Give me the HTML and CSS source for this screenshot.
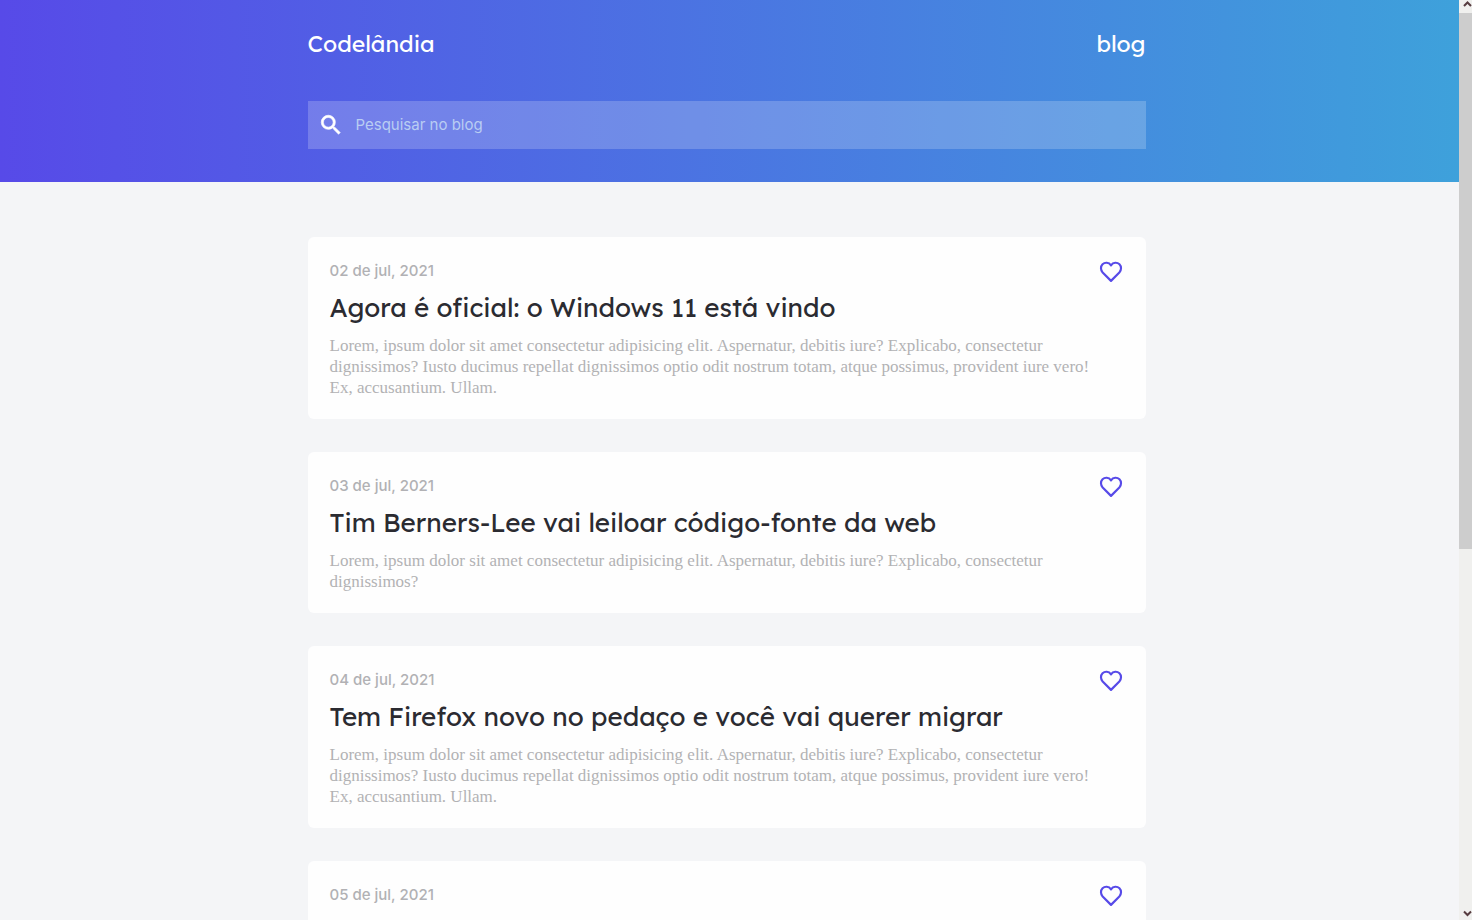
FILE: index.html
```html
<!DOCTYPE html>
<html lang="pt-BR">
<head>
<meta charset="utf-8">
<title>Codelândia</title>
<link rel="stylesheet" href="styles.css">
</head>
<body>
<svg class="sprite" aria-hidden="true">
  <symbol id="heart" viewBox="0 0 24 24"><path d="M12 20.200 4.300 12.400C2.300 10.200 2.200 6.800 4.200 4.800 6.300 2.900 9.900 2.900 12 5.800 14.100 2.900 17.700 2.900 19.800 4.800 21.800 6.800 21.700 10.200 19.700 12.400Z" fill="none" stroke="currentColor" stroke-width="2" stroke-linejoin="round"/></symbol>
</svg>
<div class="page">
  <header class="header">
    <div class="container">
      <div class="topbar">
        <a class="brand" href="#">Codelândia</a>
        <a class="brand" href="#">blog</a>
      </div>
      <form class="search">
        <svg class="search-icon" viewBox="0 0 24 24" aria-hidden="true"><path fill="currentColor" d="M15.500 14h-.79l-.28-.27A6.471 6.471 0 0 0 16 9.500 6.500 6.500 0 1 0 9.500 16c1.610 0 3.090-.59 4.230-1.570l.27.28v.79l5 4.990L20.490 19l-4.990-5zm-6 0C7.010 14 5 11.990 5 9.500S7.010 5 9.500 5 14 7.010 14 9.500 11.990 14 9.500 14z"/></svg>
        <input class="search-input" type="text" placeholder="Pesquisar no blog" aria-label="Pesquisar no blog">
      </form>
    </div>
  </header>
  <main class="content">
    <div class="container posts">
      <article class="card">
        <div class="card-top"><time class="date" datetime="2021-07-02">02 de jul, 2021</time><button class="like" type="button" aria-label="Curtir"><svg class="heart"><use href="#heart"/></svg></button></div>
        <h2 class="title">Agora é oficial: o Windows 11 está vindo</h2>
        <p class="text">Lorem, ipsum dolor sit amet consectetur adipisicing elit. Aspernatur, debitis iure? Explicabo, consectetur dignissimos? Iusto ducimus repellat dignissimos optio odit nostrum totam, atque possimus, provident iure vero! Ex, accusantium. Ullam.</p>
      </article>
      <article class="card">
        <div class="card-top"><time class="date" datetime="2021-07-03">03 de jul, 2021</time><button class="like" type="button" aria-label="Curtir"><svg class="heart"><use href="#heart"/></svg></button></div>
        <h2 class="title">Tim Berners-Lee vai leiloar código-fonte da web</h2>
        <p class="text">Lorem, ipsum dolor sit amet consectetur adipisicing elit. Aspernatur, debitis iure? Explicabo, consectetur dignissimos?</p>
      </article>
      <article class="card">
        <div class="card-top"><time class="date" datetime="2021-07-04">04 de jul, 2021</time><button class="like" type="button" aria-label="Curtir"><svg class="heart"><use href="#heart"/></svg></button></div>
        <h2 class="title">Tem Firefox novo no pedaço e você vai querer migrar</h2>
        <p class="text">Lorem, ipsum dolor sit amet consectetur adipisicing elit. Aspernatur, debitis iure? Explicabo, consectetur dignissimos? Iusto ducimus repellat dignissimos optio odit nostrum totam, atque possimus, provident iure vero! Ex, accusantium. Ullam.</p>
      </article>
      <article class="card">
        <div class="card-top"><time class="date" datetime="2021-07-05">05 de jul, 2021</time><button class="like" type="button" aria-label="Curtir"><svg class="heart"><use href="#heart"/></svg></button></div>
      </article>
    </div>
  </main>
</div>
<div class="scrollbar" aria-hidden="true">
  <svg class="arrow" viewBox="0 0 13 13"><path d="M5 6 8.500 2.500 12 6"/></svg>
  <div class="track"><div class="thumb"></div></div>
  <svg class="arrow" viewBox="0 0 13 13"><path d="M5 4.500 8.500 8 12 4.500"/></svg>
</div>
</body>
</html>
```
FILE: styles.css
```css
* { box-sizing: border-box; }
body {
  margin: 0;
  height: 100vh;
  display: flex;
  overflow: hidden;
  background: #f4f5f7;
  font-family: Inter, sans-serif;
}
.sprite { position: absolute; width: 0; height: 0; }
.page { flex: 1; min-width: 0; overflow: hidden; }
.header {
  padding: 28px 30px 33px 24px;
  background: linear-gradient(90deg, #574ae8, #3ea1db);
}
.content { padding: 55px 30px 0 24px; }
.container { max-width: 838px; margin: 0 auto; }
.topbar { display: flex; justify-content: space-between; margin-bottom: 41px; }
.brand {
  color: #fff;
  font: 400 23px/32px "Lexend Deca", Lexend, Inter, sans-serif;
  text-decoration: none;
}
.search {
  display: flex;
  align-items: center;
  gap: 12px;
  height: 48px;
  padding: 0 10px;
  background: rgba(255, 255, 255, .2);
}
.search-icon { width: 26px; height: 26px; color: #fff; stroke: #fff; stroke-width: .6; }
.search-input {
  flex: 1;
  min-width: 0;
  padding: 0;
  border: 0;
  outline: 0;
  background: none;
  color: #fff;
  font: 400 15px/20px Inter, sans-serif;
}
.search-input::placeholder { color: #b9cdf3; opacity: 1; }
.posts { display: flex; flex-direction: column; gap: 33px; }
.card { padding: 22px 22px 21px; border-radius: 6px; background: #fefefe; }
.card-top { display: flex; justify-content: space-between; height: 26px; }
.date { padding-top: 2px; color: #b1b1b4; font-size: 15px; line-height: 20px; font-weight: 500; }
.like { display: flex; padding: 0; border: 0; background: none; color: #574ae8; }
.heart { width: 26px; height: 26px; }
.title {
  margin: 6px 0 10px;
  color: #2b2b31;
  font: 400 26px/34px "Lexend Deca", Lexend, Inter, sans-serif;
}
.text {
  margin: 0;
  padding-right: 12px;
  color: #b2b2b4;
  font: 17px/21px "Liberation Serif", serif;
}
.scrollbar { flex: 0 0 13px; display: flex; flex-direction: column; background: #f0f0ee; }
.arrow { width: 13px; height: 13px; fill: none; stroke: #573c40; stroke-width: 2; }
.track { flex: 1; }
.thumb { height: 60%; background: #cdcdcd; }
```
